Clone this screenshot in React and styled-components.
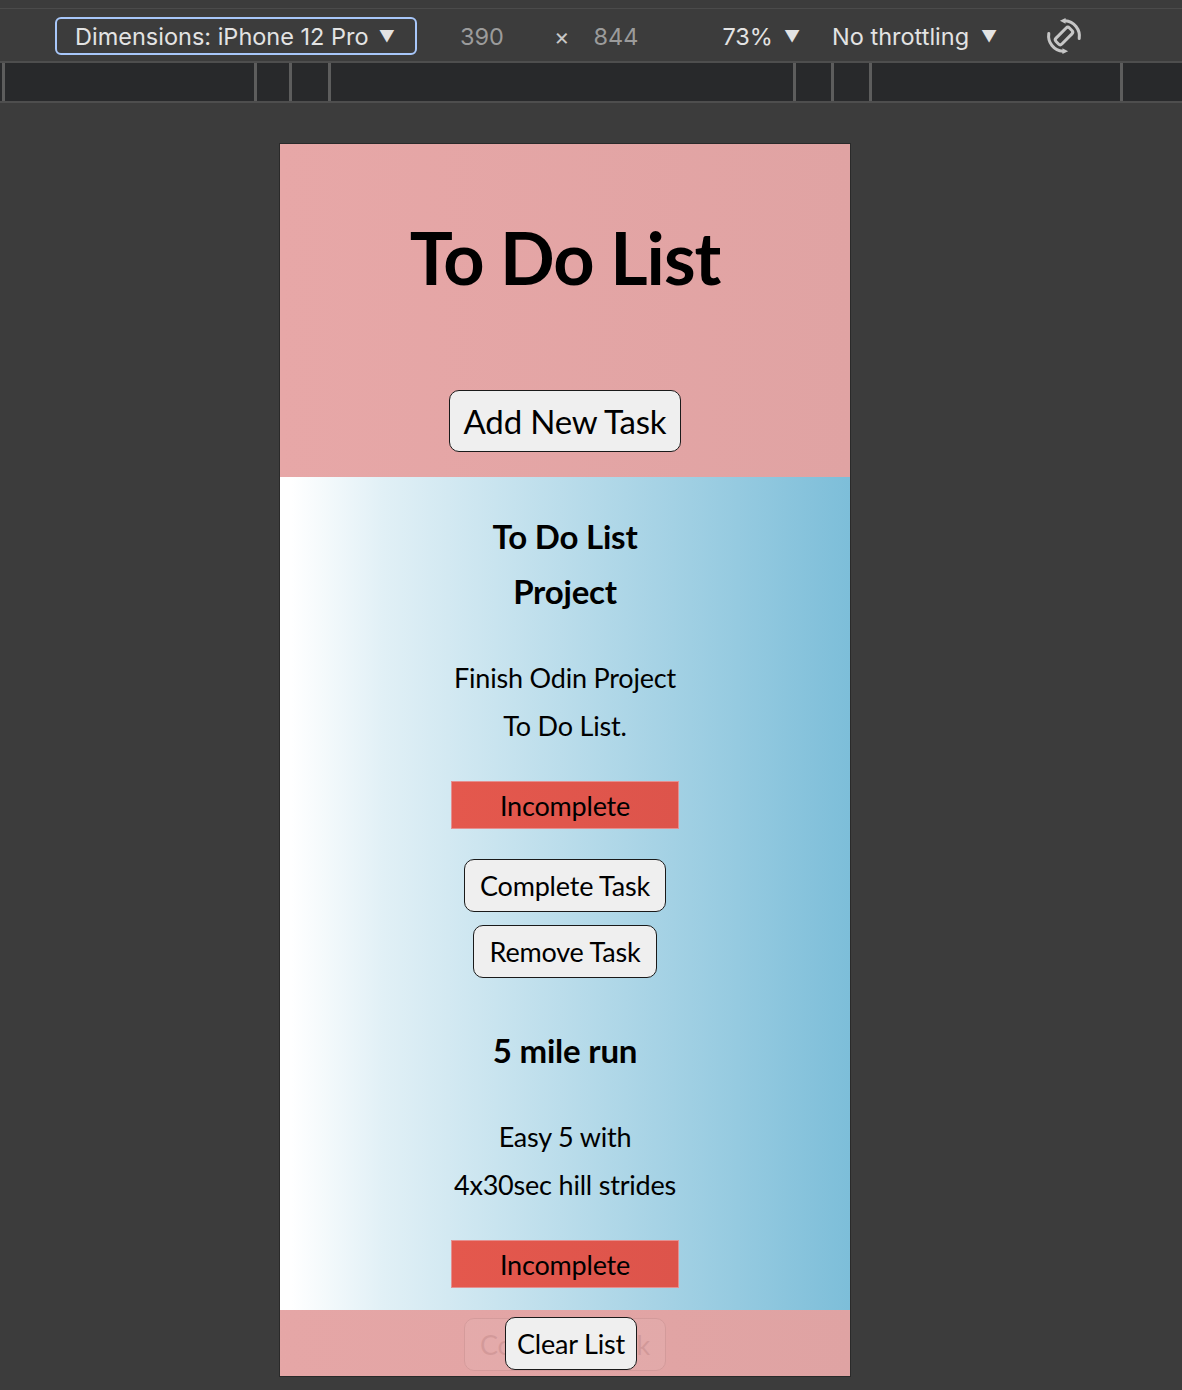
import React from 'react'
import styled, { createGlobalStyle } from 'styled-components'

const GlobalStyle = createGlobalStyle`
  html, body {
    margin: 0;
    padding: 0;
    background: #3c3c3c;
  }
  * {
    box-sizing: border-box;
  }
`

const Page = styled.div`
  width: 1182px;
  height: 1390px;
  overflow: hidden;
  background: #3c3c3c;
  display: flex;
  flex-direction: column;
`

const Toolbar = styled.div`
  height: 55px;
  flex-shrink: 0;
  border-top: 1px solid #4b4b4b;
  margin-top: 8px;
  border-bottom: 2px solid #4e4e4e;
  display: flex;
  align-items: center;
  padding: 2px 0 0 55px;
  font-family: Inter, 'Noto Sans', sans-serif;
  font-size: 23.5px;
  color: #e3e3e3;
`

const DeviceSelect = styled.div`
  width: 362px;
  height: 38px;
  border: 2px solid #a8c7fa;
  border-radius: 6px;
  display: flex;
  align-items: center;
  padding-left: 18px;
  gap: 10px;
`

const Caret = styled.span`
  font-size: 16px;
  margin-left: ${(p) => p.$gap || 0}px;
`

const Dim = styled.span`
  color: ${(p) => (p.$light ? '#c8c8c8' : '#9b9b9b')};
  margin-left: ${(p) => p.$left}px;
`

const Item = styled.span`
  margin-left: ${(p) => p.$left}px;
  display: flex;
  align-items: center;
`

const Ruler = styled.div`
  height: 40px;
  flex-shrink: 0;
  background: #28292b;
  border-bottom: 2px solid #4e4e4e;
  display: flex;
`

const RulerSeg = styled.div`
  width: ${(p) => p.$w}px;
  border-right: 3px solid #5d5d5d;
  flex-shrink: 0;
`

const Stage = styled.div`
  flex: 1;
  padding-top: 40px;
  padding-left: 279px;
`

const Phone = styled.div`
  position: relative;
  width: 572px;
  height: 1234px;
  border: 1px solid #2a2a2a;
  overflow: hidden;
  background: linear-gradient(to right, #e7a7a7, #e0a3a3);
  font-family: Lato, 'Open Sans', sans-serif;
  color: #000;
  display: flex;
  flex-direction: column;
`

const Header = styled.header`
  height: 333px;
  flex-shrink: 0;
  display: flex;
  flex-direction: column;
  align-items: center;
  padding-top: 78px;
`

const Title = styled.h1`
  margin: 0 0 98px;
  font-size: 72px;
  line-height: 70px;
  font-weight: 700;
  letter-spacing: -1px;
`

const Button = styled.button`
  font-family: inherit;
  font-size: ${(p) => (p.$big ? 33 : 27)}px;
  height: ${(p) => (p.$big ? 62 : 53)}px;
  padding: 0 ${(p) => p.$pad || 14}px;
  background: #efefef;
  color: #000;
  border: 1.5px solid #1a1a1a;
  border-radius: 10px;
  line-height: 1;
  letter-spacing: -0.2px;
  cursor: pointer;
  margin-left: ${(p) => p.$shift || 0}px;
`

const TaskList = styled.main`
  height: 833px;
  flex-shrink: 0;
  background: linear-gradient(to right, #ffffff 0%, #ffffff 2%, #e1f0f6 18%, #7dbed9 100%);
  display: flex;
  flex-direction: column;
  align-items: center;
  padding-top: 32px;
`

const Task = styled.section`
  width: 228px;
  display: flex;
  flex-direction: column;
  align-items: center;
  text-align: center;
  margin-bottom: 45px;
`

const TaskTitle = styled.h2`
  margin: 0 0 35px;
  font-size: 33px;
  line-height: 55px;
  font-weight: 700;
  letter-spacing: -0.2px;
`

const TaskDesc = styled.p`
  margin: 0 0 31px;
  font-size: 27px;
  line-height: 48px;
  letter-spacing: -0.2px;
`

const Status = styled.div`
  width: 228px;
  height: 48px;
  flex-shrink: 0;
  background: linear-gradient(to right, #e4584d, #dd544b);
  border: 1px solid #e49090;
  display: flex;
  align-items: center;
  justify-content: center;
  font-size: 27px;
  letter-spacing: -0.2px;
  margin-bottom: 30px;
`

const Actions = styled.div`
  display: flex;
  flex-direction: column;
  align-items: center;
  gap: 13px;
`

const Footer = styled.footer`
  position: absolute;
  left: 0;
  right: 0;
  bottom: 0;
  height: 66px;
  background: linear-gradient(to right, rgba(229, 166, 166, 0.93), rgba(223, 163, 163, 0.93));
  display: flex;
  justify-content: center;
  padding-top: 7px;
`

const RotateIcon = () => (
  <svg width="38" height="38" viewBox="0 0 24 24" fill="none" stroke="#c6c6c6" strokeWidth="1.9" strokeLinecap="round" strokeLinejoin="round">
    <rect x="9.4" y="6" width="5.2" height="12" rx="1.5" transform="rotate(45 12 12)" />
    <path d="M12.6 2.3A9.8 9.8 0 0 1 21.6 13.6" />
    <path d="M11.4 21.7A9.8 9.8 0 0 1 2.4 10.4" />
    <polygon points="9.4,2.4 13,0.6 13,4.2" fill="#c6c6c6" stroke="none" />
    <polygon points="14.6,21.6 11,19.8 11,23.4" fill="#c6c6c6" stroke="none" />
  </svg>
)

const tasks = [
  {
    title: 'To Do List Project',
    desc: 'Finish Odin Project To Do List.',
  },
  {
    title: '5 mile run',
    desc: 'Easy 5 with 4x30sec hill strides',
  },
]

const rulerSegs = [5, 252, 35, 39, 465, 38, 38, 251]

const App = () => {
  return (
    <Page>
      <GlobalStyle />
      <Toolbar>
        <DeviceSelect>
          Dimensions: iPhone 12 Pro <Caret>▼</Caret>
        </DeviceSelect>
        <Dim $left={43}>390</Dim>
        <Dim $left={50} $light>×</Dim>
        <Dim $left={24}>844</Dim>
        <Item $left={84}>
          73%<Caret $gap={11}>▼</Caret>
        </Item>
        <Item $left={32}>
          No throttling<Caret $gap={12}>▼</Caret>
        </Item>
        <Item $left={48}>
          <RotateIcon />
        </Item>
      </Toolbar>
      <Ruler>
        {rulerSegs.map((w, i) => (
          <RulerSeg key={i} $w={w} />
        ))}
      </Ruler>
      <Stage>
        <Phone>
          <Header>
            <Title>To Do List</Title>
            <Button $big>Add New Task</Button>
          </Header>
          <TaskList>
            {tasks.map((t) => (
              <Task key={t.title}>
                <TaskTitle>{t.title}</TaskTitle>
                <TaskDesc>{t.desc}</TaskDesc>
                <Status>Incomplete</Status>
                <Actions>
                  <Button $pad={15}>Complete Task</Button>
                  <Button $pad={16}>Remove Task</Button>
                </Actions>
              </Task>
            ))}
          </TaskList>
          <Footer>
            <Button $pad={11} $shift={12}>Clear List</Button>
          </Footer>
        </Phone>
      </Stage>
    </Page>
  )
}

export default App
